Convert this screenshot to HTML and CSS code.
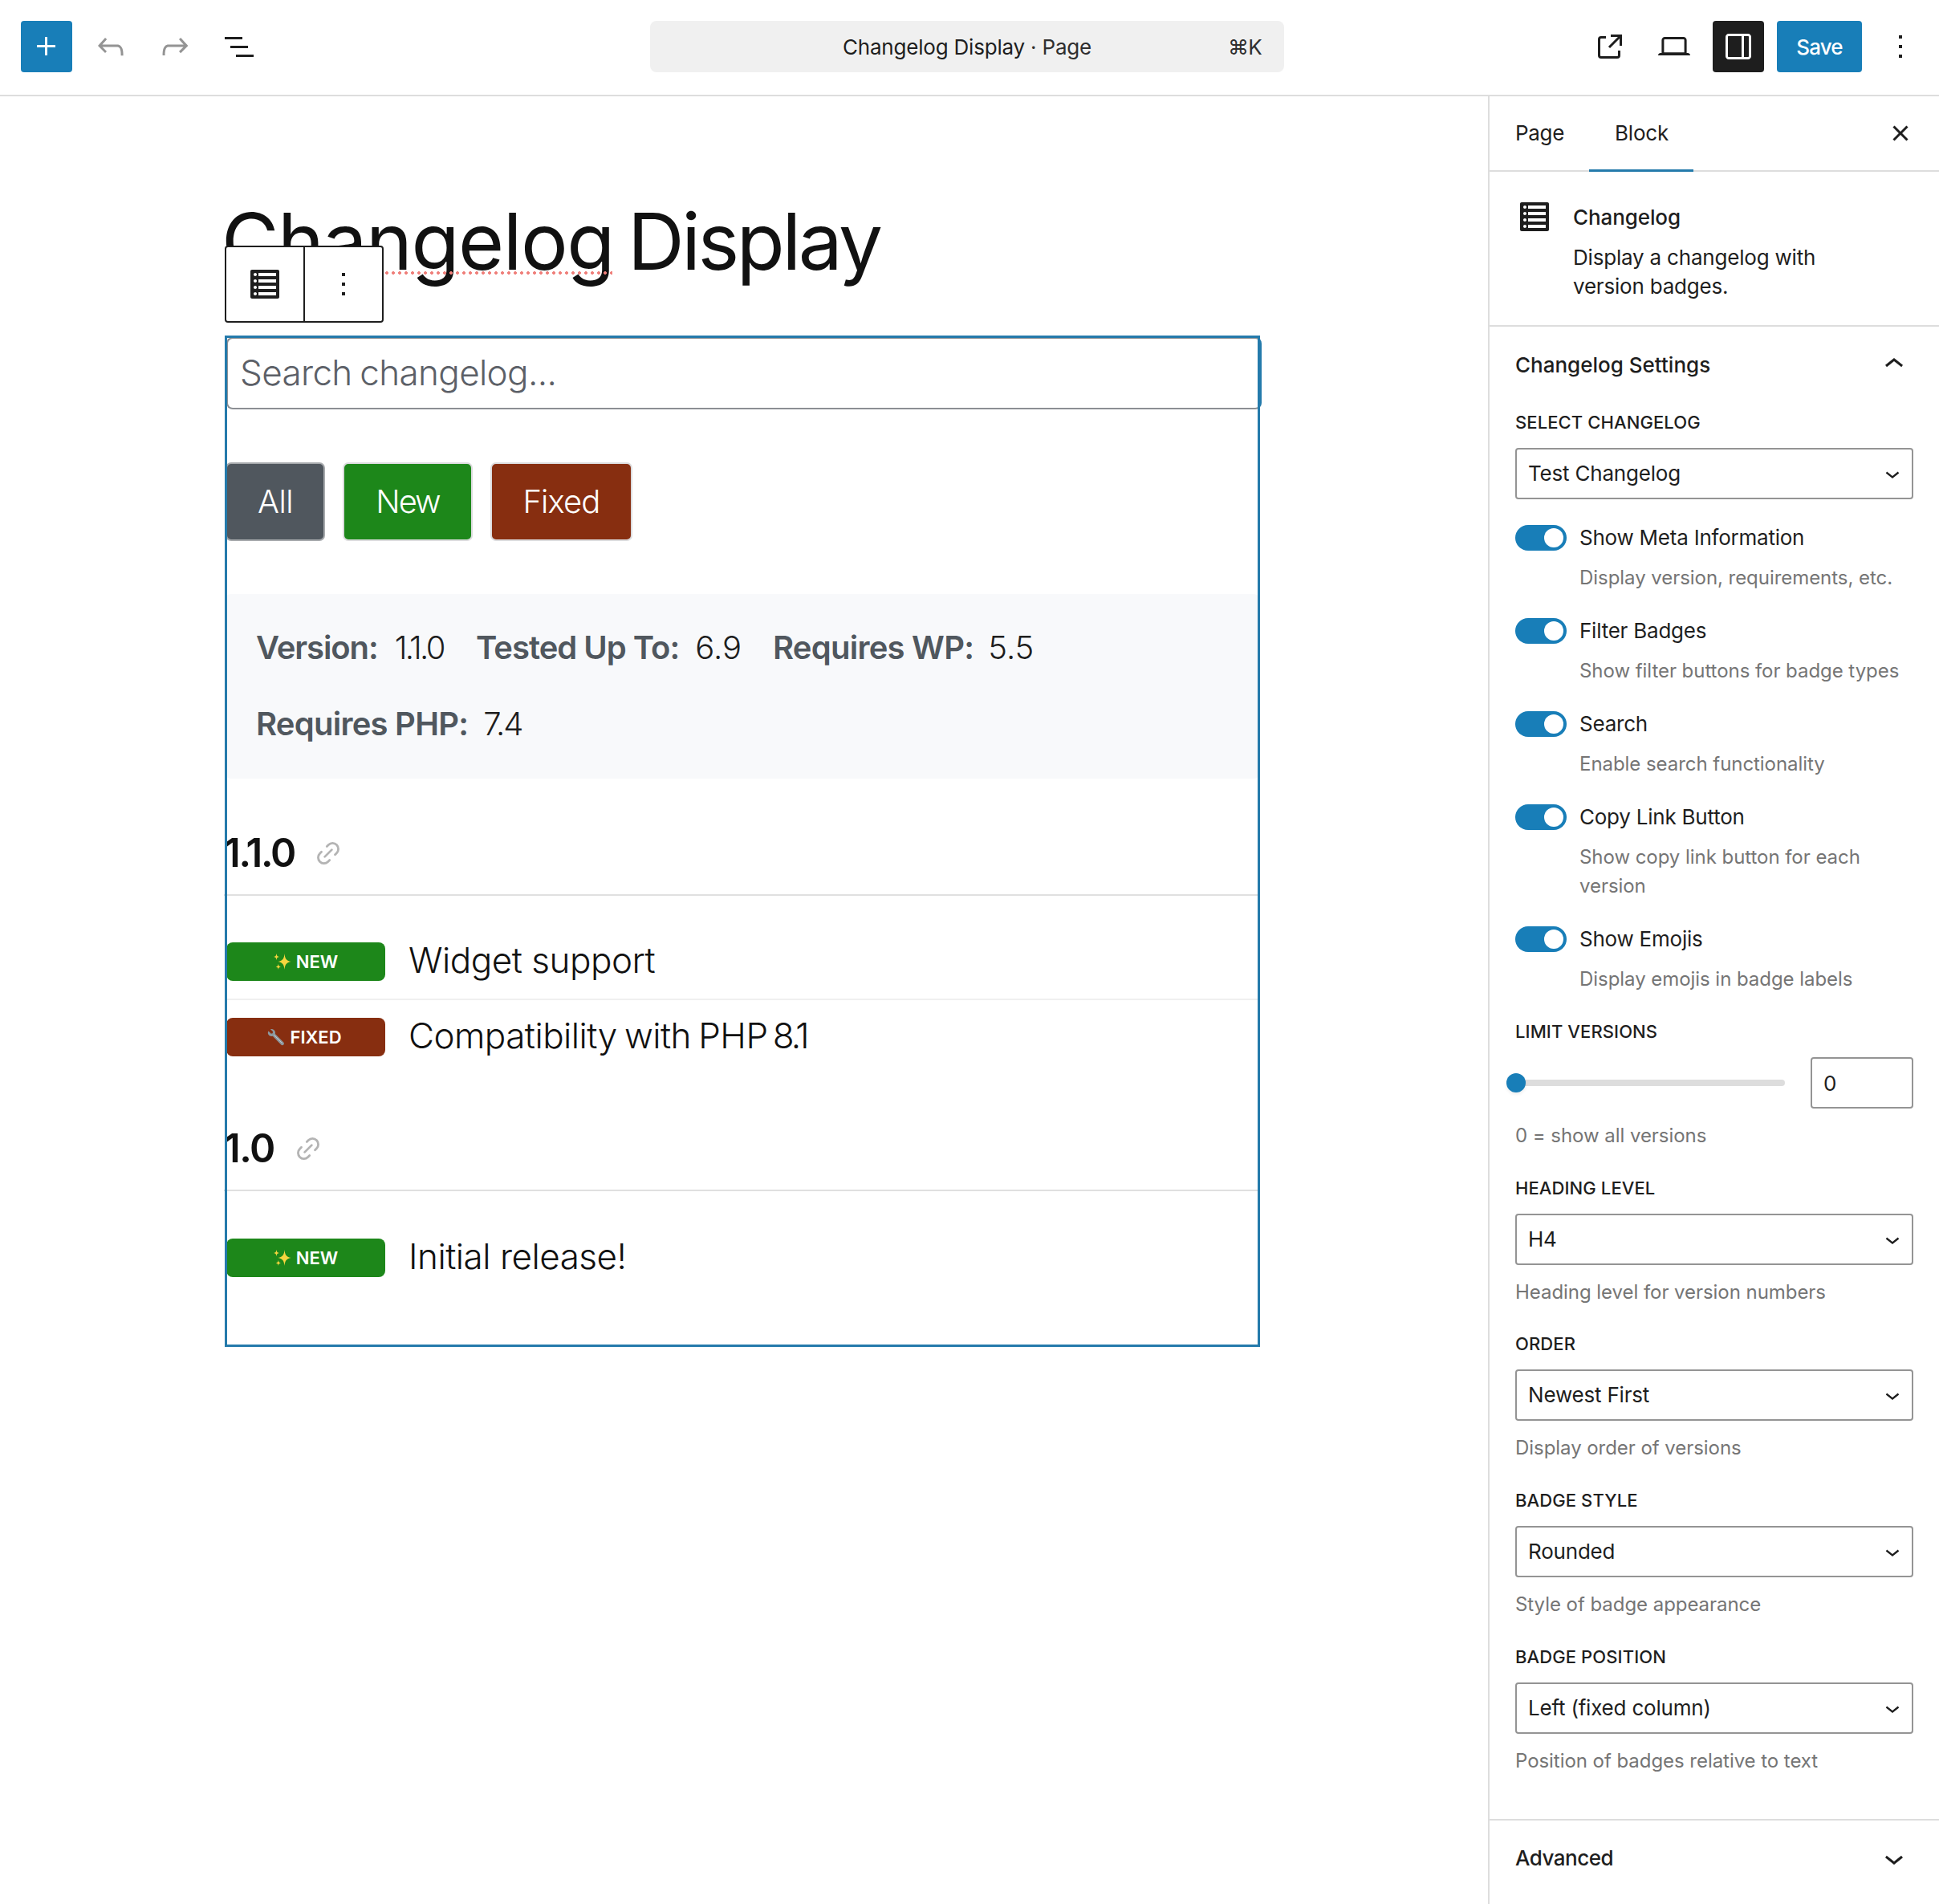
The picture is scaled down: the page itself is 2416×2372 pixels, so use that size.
FILE: index.html
```html
<!DOCTYPE html>
<html lang="en">
<head>
<meta charset="utf-8">
<title>Changelog Display</title>
<link rel="stylesheet" href="styles.css">
</head>
<body>
<svg class="defs" aria-hidden="true">
  <symbol id="i-list" viewBox="0 0 20 20"><path d="M2 19h16c.55 0 1-.45 1-1V2c0-.55-.45-1-1-1H2c-.55 0-1 .45-1 1v16c0 .55.45 1 1 1zM4 3c.55 0 1 .45 1 1s-.45 1-1 1-1-.45-1-1 .45-1 1-1zm13 0v2H6V3h11zM4 7c.55 0 1 .45 1 1s-.45 1-1 1-1-.45-1-1 .45-1 1-1zm13 0v2H6V7h11zM4 11c.55 0 1 .45 1 1s-.45 1-1 1-1-.45-1-1 .45-1 1-1zm13 0v2H6v-2h11zM4 15c.55 0 1 .45 1 1s-.45 1-1 1-1-.45-1-1 .45-1 1-1zm13 0v2H6v-2h11z"/></symbol>
  <symbol id="i-more" viewBox="0 0 24 24"><path d="M13 19h-2v-2h2v2zm0-6h-2v-2h2v2zm0-6h-2V5h2v2z"/></symbol>
  <symbol id="i-down" viewBox="0 0 24 24"><path d="M17.5 11.6L12 16l-5.5-4.4.9-1.2L12 14l4.5-3.6 1 1.2z"/></symbol>
  <symbol id="i-link" viewBox="-16 -16 32 32"><g transform="rotate(-45)" fill="none" stroke="#b4b4b4" stroke-width="2.8" stroke-linecap="round"><path d="M4.8-7.2H7.6A7.2 7.2 0 0 1 7.6 7.2H4.8M-4.8-7.2H-7.6A7.2 7.2 0 0 0-7.6 7.2H-4.8M-6.2 0H6.2"/></g></symbol>
  <symbol id="i-sparkles" viewBox="0 0 22 22"><g fill="#f7d53f"><path d="M13.5 1C14.2 7.300 15.300 9.500 21.500 11 15.300 12.500 14.200 14.700 13.500 21 12.800 14.700 11.700 12.500 5.500 11 11.700 9.500 12.800 7.300 13.500 1Z"/><path d="M3.500.8C3.900 3.700 4.400 4.500 7 5 4.400 5.500 3.900 6.300 3.500 9.200 3.100 6.300 2.600 5.500 0 5 2.600 4.500 3.100 3.700 3.500.8Z"/><path d="M5.800 13.800C6.100 16.200 6.600 16.900 8.900 17.400 6.600 17.900 6.100 18.600 5.800 21 5.500 18.600 5 17.900 2.700 17.400 5 16.900 5.500 16.200 5.800 13.800Z"/></g></symbol>
  <symbol id="i-wrench" viewBox="0 0 24 24"><path fill="#8d989e" d="M4.200 1.200 7.800 4.700 7.300 6.900 5.200 7.300 1.600 3.900C.3 6 .8 8.400 2.600 9.900 4.100 11.100 6 11.300 7.400 10.700L18.800 22.300C19.800 23.300 21.300 23.300 22.200 22.400 23.100 21.500 23.100 20.100 22.100 19.100L10.700 7.700C11.300 5.900 10.900 4 9.500 2.600 8.100 1.200 6 .6 4.200 1.200Z"/><path fill="none" stroke="#c3cbd0" stroke-width="1" d="M9.300 9.300 20 20"/></symbol>
</svg>

<header class="topbar">
  <div class="tools">
    <button class="btn btn-primary"><svg viewBox="0 0 24 24"><path d="M11 12.500V17.500H12.500V12.500H17.500V11H12.500V6H11V11H6V12.500H11Z"/></svg></button>
    <button class="btn muted"><svg viewBox="0 0 24 24"><path d="M18.300 11.700c-.6-.6-1.400-.9-2.300-.9H6.700l2.900-3.300-1.100-1-4.500 5L8.500 16l1-1-2.700-2.700H16c.5 0 .9.2 1.300.5 1 1 1 3.400 1 4.500v.3h1.500v-.2c0-1.500 0-4.300-1.500-5.700z"/></svg></button>
    <button class="btn muted"><svg viewBox="0 0 24 24"><path d="M15.600 6.500l-1.100 1 2.900 3.300H8c-.9 0-1.700.3-2.300.9-1.400 1.500-1.400 4.200-1.400 5.600v.2h1.500v-.3c0-1.100 0-3.500 1-4.500.3-.3.7-.5 1.300-.5h9.200L14.500 15l1.100 1.100 4.600-4.600-4.600-5z"/></svg></button>
    <button class="btn"><svg viewBox="0 0 24 24"><path d="M3 6h11v1.500H3V6Zm3.500 5.500h11V13h-11v-1.500ZM21 17H10v1.500h11V17Z"/></svg></button>
  </div>
  <div class="command"><span class="command-title">Changelog Display <span class="command-type">· Page</span></span><span class="shortcut">⌘K</span></div>
  <div class="actions">
    <button class="btn"><svg viewBox="0 0 24 24"><path d="M19.500 4.500h-7V6h4.440l-5.970 5.970 1.060 1.060L18 7.060v4.440h1.500v-7Zm-13 1a2 2 0 0 0-2 2v10a2 2 0 0 0 2 2h10a2 2 0 0 0 2-2v-3H17v3a.5.5 0 0 1-.5.5h-10a.5.5 0 0 1-.5-.5v-10a.5.5 0 0 1 .5-.5h3V5.500h-3Z"/></svg></button>
    <button class="btn"><svg viewBox="0 0 24 24"><path d="M20.500 16h-.7V8c0-1.100-.9-2-2-2H6.200c-1.100 0-2 .9-2 2v8h-.7c-.8 0-1.500.7-1.500 1.500h20c0-.8-.7-1.500-1.500-1.500zM5.700 8c0-.3.200-.5.500-.5h11.600c.3 0 .5.200.5.500v7.600H5.700V8z"/></svg></button>
    <button class="btn btn-dark"><svg viewBox="0 0 24 24"><path d="M18 4H6c-1.100 0-2 .9-2 2v12c0 1.100.9 2 2 2h12c1.100 0 2-.9 2-2V6c0-1.100-.9-2-2-2zm-4 14.500H6c-.3 0-.5-.2-.5-.5V6c0-.3.200-.5.500-.5h8v13zm4.500-.5c0 .3-.2.5-.5.5h-2.500v-13H18c.3 0 .5.200.5.500v12z"/></svg></button>
    <button class="btn btn-primary btn-save">Save</button>
    <button class="btn"><svg><use href="#i-more"/></svg></button>
  </div>
</header>

<div class="workspace">
  <main class="canvas">
    <h1 class="title"><span class="misspelled">Changelog</span> <span class="title-rest">Display</span></h1>
    <section class="block">
      <div class="block-toolbar">
        <button class="toolbar-btn"><svg class="icon-list"><use href="#i-list"/></svg></button>
        <button class="toolbar-btn"><svg class="icon-dots"><use href="#i-more"/></svg></button>
      </div>
      <div class="search">Search changelog...</div>
      <div class="filters">
        <button class="filter filter-all">All</button>
        <button class="filter filter-new">New</button>
        <button class="filter filter-fixed">Fixed</button>
      </div>
      <dl class="meta">
        <div class="meta-item meta-version"><dt>Version:</dt><dd>1.1.0</dd></div>
        <div class="meta-item meta-tested"><dt>Tested Up To:</dt><dd>6.9</dd></div>
        <div class="meta-item meta-wp"><dt>Requires WP:</dt><dd>5.5</dd></div>
        <div class="meta-item meta-php"><dt>Requires PHP:</dt><dd>7.4</dd></div>
      </dl>
      <h4 class="version version-long"><span>1.1.0</span><svg><use href="#i-link"/></svg></h4>
      <ul class="changes">
        <li><span class="badge badge-new"><svg><use href="#i-sparkles"/></svg>NEW</span><span class="change">Widget support</span></li>
        <li><span class="badge badge-fixed"><svg><use href="#i-wrench"/></svg>FIXED</span><span class="change change-long">Compatibility with PHP <span class="digits">8.1</span></span></li>
      </ul>
      <h4 class="version"><span>1.0</span><svg><use href="#i-link"/></svg></h4>
      <ul class="changes">
        <li><span class="badge badge-new"><svg><use href="#i-sparkles"/></svg>NEW</span><span class="change">Initial release!</span></li>
      </ul>
    </section>
  </main>

  <aside class="sidebar">
    <nav class="tabs">
      <button class="tab">Page</button>
      <button class="tab tab-active">Block</button>
      <button class="close"><svg viewBox="0 0 24 24"><path d="M12 13.060l3.712 3.713 1.061-1.060L13.061 12l3.712-3.712-1.060-1.060L12 10.938 8.288 7.227l-1.061 1.060L10.939 12l-3.712 3.712 1.060 1.061L12 13.061z"/></svg></button>
    </nav>
    <div class="card">
      <svg><use href="#i-list"/></svg>
      <div>
        <h2 class="card-title">Changelog</h2>
        <p class="card-text">Display a changelog with<br>version badges.</p>
      </div>
    </div>
    <section class="panel">
      <h2 class="panel-title panel-open">Changelog Settings<svg viewBox="0 0 24 24"><path d="M6.500 12.400L12 8l5.500 4.400-.9 1.200L12 10l-4.500 3.600-1-1.200z"/></svg></h2>
      <div class="field field-first">
        <label class="label">Select Changelog</label>
        <div class="select">Test Changelog<svg><use href="#i-down"/></svg></div>
      </div>
      <div class="toggle-field"><span class="toggle"></span><span class="toggle-label">Show Meta Information</span><p class="help">Display version, requirements, etc.</p></div>
      <div class="toggle-field"><span class="toggle"></span><span class="toggle-label">Filter Badges</span><p class="help">Show filter buttons for badge types</p></div>
      <div class="toggle-field"><span class="toggle"></span><span class="toggle-label">Search</span><p class="help">Enable search functionality</p></div>
      <div class="toggle-field"><span class="toggle"></span><span class="toggle-label">Copy Link Button</span><p class="help">Show copy link button for each<br>version</p></div>
      <div class="toggle-field toggle-last"><span class="toggle"></span><span class="toggle-label">Show Emojis</span><p class="help">Display emojis in badge labels</p></div>
      <div class="field">
        <label class="label">Limit Versions</label>
        <div class="range"><div class="track"><span class="thumb"></span></div><div class="number">0</div></div>
        <p class="help">0 = show all versions</p>
      </div>
      <div class="field">
        <label class="label">Heading Level</label>
        <div class="select">H4<svg><use href="#i-down"/></svg></div>
        <p class="help">Heading level for version numbers</p>
      </div>
      <div class="field">
        <label class="label">Order</label>
        <div class="select">Newest First<svg><use href="#i-down"/></svg></div>
        <p class="help">Display order of versions</p>
      </div>
      <div class="field">
        <label class="label">Badge Style</label>
        <div class="select">Rounded<svg><use href="#i-down"/></svg></div>
        <p class="help">Style of badge appearance</p>
      </div>
      <div class="field field-last">
        <label class="label">Badge Position</label>
        <div class="select">Left (fixed column)<svg><use href="#i-down"/></svg></div>
        <p class="help">Position of badges relative to text</p>
      </div>
    </section>
    <section class="panel panel-closed">
      <h2 class="panel-title panel-advanced">Advanced<svg><use href="#i-down"/></svg></h2>
    </section>
  </aside>
</div>
</body>
</html>
```
FILE: styles.css
```css
* { box-sizing: border-box; margin: 0; padding: 0; }
body { width: 2416px; height: 2372px; overflow: hidden; background: #fff; color: #1e1e1e; font: 400 26px/36px Inter, sans-serif; }
button { border: 0; background: none; font: inherit; color: inherit; }
svg { display: block; flex: none; fill: currentColor; }
ul { list-style: none; }
.defs { position: absolute; width: 0; height: 0; }

/* Top bar */
.topbar { display: grid; grid-template-columns: 784px 790px 1fr; align-items: start; height: 120px; padding: 26px 16px 0 26px; border-bottom: 2px solid #ddd; }
.tools, .actions { display: flex; gap: 16px; }
.actions { justify-content: flex-end; }
.btn { display: flex; align-items: center; justify-content: center; width: 64px; height: 64px; border-radius: 4px; }
.btn svg { width: 48px; height: 48px; }
.btn-primary { background: #187eb8; color: #fff; }
.btn-dark { background: #1e1e1e; color: #fff; }
.btn-save { width: 106px; padding-top: 2px; font-weight: 500; letter-spacing: -.8px; }
.muted { color: #949494; }
.command { position: relative; display: flex; align-items: center; justify-content: center; height: 64px; padding-top: 2px; border-radius: 8px; background: #f0f0f0; letter-spacing: -.2px; }
.command-type { color: #2f2f2f; }
.shortcut { position: absolute; right: 28px; color: #2f2f2f; letter-spacing: -.8px; }

.workspace { display: flex; height: 2252px; }

/* Editor canvas */
.canvas { flex: 1; padding: 121px 0 0 280px; }
.title { height: 120px; margin-left: -4px; font-size: 98px; font-weight: 370; line-height: 120px; letter-spacing: -1.5px; word-spacing: -9px; color: #111; white-space: nowrap; }
.title-rest { letter-spacing: -3.4px; }
.misspelled { position: relative; }
.misspelled::after { content: ""; position: absolute; left: 2px; right: 2px; bottom: 18px; height: 4px; background: radial-gradient(circle, #ef7f7a 1.700px, transparent 2.200px) 0 0 / 8px 4px repeat-x; }
.block { position: relative; width: 1290px; height: 1260px; margin-top: 57px; padding: 2px 0 0 2px; }
.block::after { content: ""; position: absolute; inset: 0; border: 3px solid #247aab; pointer-events: none; }
.block-toolbar { position: absolute; z-index: 2; left: 0; top: -112px; display: flex; width: 198px; height: 96px; border: 2px solid #1e1e1e; border-radius: 4px; background: #fff; }
.toolbar-btn { flex: 1; display: flex; align-items: center; justify-content: center; }
.toolbar-btn + .toolbar-btn { border-left: 2px solid #1e1e1e; }
.icon-list { width: 40px; height: 40px; }
.icon-dots { width: 48px; height: 48px; }
.search { width: 1290px; height: 90px; padding-left: 15px; border: 2px solid #8c8f94; border-right-color: #247aab; border-radius: 8px; font-size: 44px; font-weight: 300; line-height: 85px; letter-spacing: -.65px; word-spacing: -2px; color: #5c6067; }
.filters { display: flex; gap: 22px; margin: 66px 0 0 -1px; }
.filter { height: 98px; border: 2px solid #dcdcde; border-radius: 7px; color: #fff; font-size: 40px; font-weight: 300; }
.filter-all { width: 124px; border-color: #a7aaad; background: #50575e; letter-spacing: -.6px; }
.filter-new { width: 162px; background: #1d871a; letter-spacing: -2px; }
.filter-fixed { width: 177px; background: #872e10; letter-spacing: -.85px; }
.meta { display: grid; grid-template-columns: 275px 370px 1fr; row-gap: 35px; height: 230px; margin: 66px 0 0 -2px; padding: 37px 0 0 39px; border-radius: 8px; background: #f8f9fb; font-size: 40px; line-height: 60px; white-space: nowrap; align-content: start; }
.meta-item { display: flex; gap: 21px; }
.meta dt { font-weight: 600; color: #50575e; letter-spacing: -.75px; }
.meta dd { font-weight: 300; }
.meta-version dt { letter-spacing: -1.090px; }
.meta-version dd { letter-spacing: -2.650px; }
.meta-tested { gap: 20px; margin-left: -1px; }
.meta-tested dt { letter-spacing: -1px; }
.meta-wp { gap: 18px; margin-left: -1px; }
.meta-php { gap: 19px; }
.meta-php dd { letter-spacing: -1.800px; }
.version { display: flex; align-items: center; gap: 26px; height: 83px; margin: 63px 0 0 -3px; padding-bottom: 21px; border-bottom: 2px solid #e0e0e0; font-size: 49px; font-weight: 600; line-height: 60px; letter-spacing: -1.500px; color: #111; }
.version-long { letter-spacing: -2.240px; }
.version svg { width: 32px; height: 32px; }
.changes { padding-top: 36px; }
.version:not(.version-long) + .changes { padding-top: 37px; }
.changes li { display: flex; align-items: center; gap: 29px; height: 92px; }
.changes li:not(:last-child) { height: 94px; border-bottom: 2px solid #f0f0f0; }
.badge { display: flex; align-items: center; justify-content: center; gap: 6px; width: 198px; height: 48px; border-radius: 8px; color: #fff; font-size: 22px; font-weight: 600; line-height: 48px; }
.badge svg { width: 22px; height: 22px; }
.badge-new { background: #1d871a; }
.badge-fixed { padding-right: 3px; background: #872e10; }
.change { margin-top: -4px; font-size: 44px; font-weight: 300; line-height: 60px; letter-spacing: -.5px; color: #111; }
.change-long { letter-spacing: -.55px; word-spacing: -2.500px; }
.digits { margin-left: -3px; letter-spacing: -3px; }

/* Settings sidebar */
.sidebar { width: 562px; border-left: 2px solid #ddd; }
.tabs { display: flex; height: 94px; border-bottom: 2px solid #ddd; }
.tab { height: 94px; padding: 0 32px 2px; letter-spacing: -.3px; }
.tab:first-child { width: 124px; }
.tab-active { width: 130px; padding-bottom: 0; border-bottom: 3px solid #247aab; letter-spacing: -.2px; }
.close { margin: 22px 24px 0 auto; width: 48px; height: 48px; }
.close svg { width: 48px; height: 48px; }
.card { display: flex; gap: 28px; height: 193px; padding: 41px 32px 0; border-bottom: 2px solid #ddd; }
.card svg { width: 40px; height: 40px; margin: -5px 0 0 4px; }
.card-title { font-size: 26px; font-weight: 500; line-height: 32px; letter-spacing: -.1px; }
.card-text { margin-top: 16px; line-height: 36.400px; letter-spacing: -.2px; }
.panel { padding: 0 32px; border-bottom: 2px solid #ddd; }
.panel-title { display: flex; align-items: center; justify-content: space-between; height: 95px; margin-bottom: 8px; font-size: 26px; font-weight: 500; }
.panel-title svg { width: 48px; height: 48px; }
.panel-open svg { margin-top: -2px; }
.field { margin-bottom: 30.670px; }
.field-first { margin-bottom: 32px; }
.field-last { margin-bottom: 54px; }
.label { display: block; margin-bottom: 16px; font-size: 22px; font-weight: 500; line-height: 32px; letter-spacing: .1px; text-transform: uppercase; }
.select { display: flex; align-items: center; justify-content: space-between; height: 64px; padding: 0 6px 0 14px; border: 2px solid #949494; border-radius: 4px; letter-spacing: -.2px; }
.select svg { width: 36px; height: 36px; }
.help { margin-top: 16px; font-size: 24px; line-height: 36px; letter-spacing: -.05px; color: #757575; }
.toggle-field { display: grid; grid-template-columns: 64px 1fr; column-gap: 16px; margin-bottom: 32px; }
.toggle-last { margin-bottom: 31px; }
.toggle { height: 32px; padding: 4px; border-radius: 16px; background: #187eb8; }
.toggle::after { content: ""; display: block; width: 24px; height: 24px; margin-left: auto; border-radius: 50%; background: #fff; }
.toggle-label { line-height: 32px; letter-spacing: -.23px; }
.toggle-field .help { grid-column: 2; white-space: nowrap; }
.range { display: flex; align-items: center; gap: 32px; height: 64px; }
.track { position: relative; flex: 1; height: 8px; border-radius: 4px; background: #ddd; }
.thumb { position: absolute; left: -11px; top: -8px; width: 24px; height: 24px; border-radius: 50%; background: #187eb8; box-shadow: 0 2px 4px rgba(0, 0, 0, .08); }
.number { width: 128px; height: 64px; padding-left: 14px; border: 2px solid #949494; border-radius: 4px; line-height: 61px; }
.panel-closed { border-bottom: 0; }
.panel-advanced { letter-spacing: -.5px; }
```
